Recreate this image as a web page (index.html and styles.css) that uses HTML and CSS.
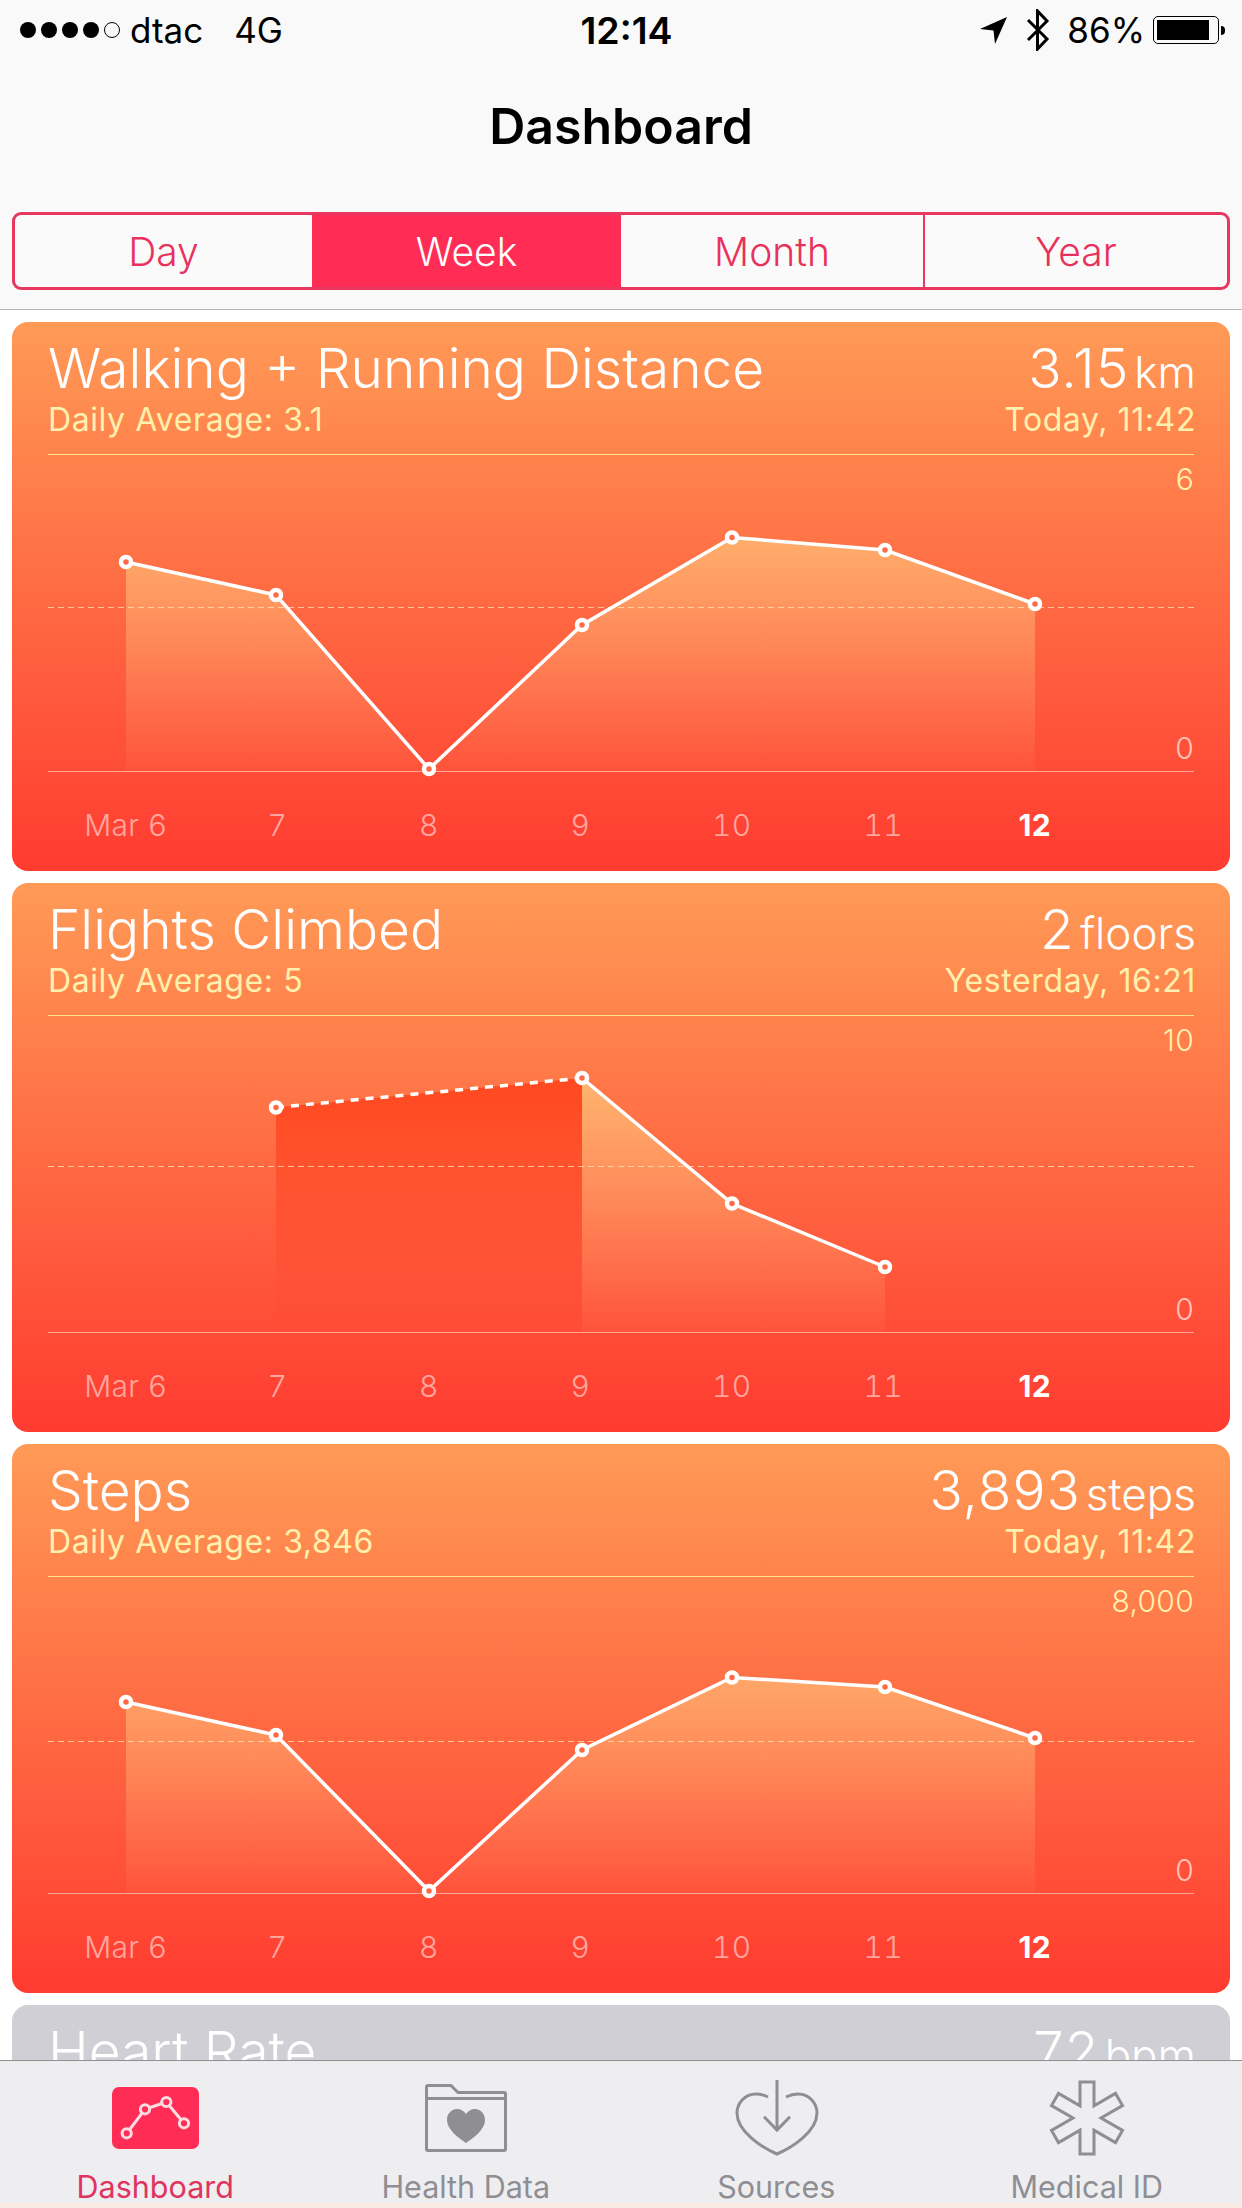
FILE: index.html
```html
<!DOCTYPE html>
<html lang="en">
<head>
  <meta charset="UTF-8">
  <meta name="viewport" content="width=device-width, initial-scale=1.0">
  <title>Dashboard</title>
  <link rel="stylesheet" href="styles.css">
</head>
<body>
<div class="screen">

  <header class="top">
    <div class="statusbar">
      <div class="status-left">
        <span class="dot"></span><span class="dot"></span><span class="dot"></span><span class="dot"></span><span class="dot empty"></span>
        <span class="carrier">dtac</span>
        <span class="network">4G</span>
      </div>
      <div class="clock">12:14</div>
      <div class="status-right">
        <svg class="ic-arrow" width="28" height="27" viewBox="0 0 28 27"><path d="M0 12 L27 0 L15 27 L13.5 13.5 Z" fill="#000"/></svg>
        <svg class="ic-bt" width="24" height="42" viewBox="0 0 24 42"><path d="M2 11 L21 30 L11.5 40 L11.5 2 L21 12 L2 31" fill="none" stroke="#000" stroke-width="3"/></svg>
        <span class="percent">86%</span>
        <div class="battery"><div class="battery-fill"></div></div>
        <div class="battery-nub"></div>
      </div>
    </div>
    <div class="navtitle">Dashboard</div>
    <div class="segments">
      <div class="seg seg-day">Day</div>
      <div class="seg seg-week active">Week</div>
      <div class="seg seg-month">Month</div>
      <div class="seg seg-year">Year</div>
    </div>
  </header>

  <main class="cards">

    <section class="card">
      <div class="card-head">
        <div class="row">
          <span class="title">Walking + Running Distance</span>
          <span class="value">3.15<small>km</small></span>
        </div>
        <div class="row row-sub">
          <span>Daily Average: 3.1</span>
          <span>Today, 11:42</span>
        </div>
      </div>
      <div class="chart">
        <svg class="plot" width="1146" height="330" viewBox="0 0 1146 330">
          <defs>
            <linearGradient id="areaFill" gradientUnits="userSpaceOnUse" x1="0" y1="70" x2="0" y2="316">
              <stop offset="0" stop-color="#ffbc74" stop-opacity="0.85"/>
              <stop offset="1" stop-color="#ffa070" stop-opacity="0.08"/>
            </linearGradient>
            <linearGradient id="gapFill" gradientUnits="userSpaceOnUse" x1="0" y1="80" x2="0" y2="316">
              <stop offset="0" stop-color="#ff4a22" stop-opacity="1"/>
              <stop offset="1" stop-color="#ff4a32" stop-opacity="0.2"/>
            </linearGradient>
          </defs>
          <path d="M78 107 L228 140 L381 314 L534 170 L684 82.5 L837 95 L987 149 L987 316 L78 316 Z" fill="url(#areaFill)"/>
          <line class="mid" x1="0" y1="152.5" x2="1146" y2="152.5"/>
          <line class="base" x1="0" y1="316.5" x2="1146" y2="316.5"/>
          <polyline class="trace" points="78,107 228,140 381,314 534,170 684,82.5 837,95 987,149"/>
          <circle class="pt" cx="78" cy="107" r="5"/>
          <circle class="pt" cx="228" cy="140" r="5"/>
          <circle class="pt" cx="381" cy="314" r="5"/>
          <circle class="pt" cx="534" cy="170" r="5"/>
          <circle class="pt" cx="684" cy="82.5" r="5"/>
          <circle class="pt" cx="837" cy="95" r="5"/>
          <circle class="pt" cx="987" cy="149" r="5"/>
        </svg>
        <span class="y-max">6</span>
        <span class="y-min">0</span>
      </div>
      <div class="days">
        <span>Mar 6</span><span>7</span><span>8</span><span>9</span><span>10</span><span>11</span><span class="today">12</span>
      </div>
    </section>

    <section class="card">
      <div class="card-head">
        <div class="row">
          <span class="title">Flights Climbed</span>
          <span class="value">2<small>floors</small></span>
        </div>
        <div class="row row-sub">
          <span>Daily Average: 5</span>
          <span>Yesterday, 16:21</span>
        </div>
      </div>
      <div class="chart">
        <svg class="plot" width="1146" height="330" viewBox="0 0 1146 330">
          <path d="M228 91.5 L534 62 L534 316 L228 316 Z" fill="url(#gapFill)"/>
          <path d="M534 62 L684 187.5 L837 251 L837 316 L534 316 Z" fill="url(#areaFill)"/>
          <line class="mid" x1="0" y1="150.5" x2="1146" y2="150.5"/>
          <line class="base" x1="0" y1="316.5" x2="1146" y2="316.5"/>
          <line class="trace gap" x1="228" y1="91.5" x2="534" y2="62"/>
          <polyline class="trace" points="534,62 684,187.5 837,251"/>
          <circle class="pt" cx="228" cy="91.5" r="5"/>
          <circle class="pt" cx="534" cy="62" r="5"/>
          <circle class="pt" cx="684" cy="187.5" r="5"/>
          <circle class="pt" cx="837" cy="251" r="5"/>
        </svg>
        <span class="y-max">10</span>
        <span class="y-min">0</span>
      </div>
      <div class="days">
        <span>Mar 6</span><span>7</span><span>8</span><span>9</span><span>10</span><span>11</span><span class="today">12</span>
      </div>
    </section>

    <section class="card">
      <div class="card-head">
        <div class="row">
          <span class="title">Steps</span>
          <span class="value">3,893<small>steps</small></span>
        </div>
        <div class="row row-sub">
          <span>Daily Average: 3,846</span>
          <span>Today, 11:42</span>
        </div>
      </div>
      <div class="chart">
        <svg class="plot" width="1146" height="330" viewBox="0 0 1146 330">
          <path d="M78 125 L228 158 L381 314 L534 173 L684 100.5 L837 110 L987 161 L987 316 L78 316 Z" fill="url(#areaFill)"/>
          <line class="mid" x1="0" y1="164.5" x2="1146" y2="164.5"/>
          <line class="base" x1="0" y1="316.5" x2="1146" y2="316.5"/>
          <polyline class="trace" points="78,125 228,158 381,314 534,173 684,100.5 837,110 987,161"/>
          <circle class="pt" cx="78" cy="125" r="5"/>
          <circle class="pt" cx="228" cy="158" r="5"/>
          <circle class="pt" cx="381" cy="314" r="5"/>
          <circle class="pt" cx="534" cy="173" r="5"/>
          <circle class="pt" cx="684" cy="100.5" r="5"/>
          <circle class="pt" cx="837" cy="110" r="5"/>
          <circle class="pt" cx="987" cy="161" r="5"/>
        </svg>
        <span class="y-max">8,000</span>
        <span class="y-min">0</span>
      </div>
      <div class="days">
        <span>Mar 6</span><span>7</span><span>8</span><span>9</span><span>10</span><span>11</span><span class="today">12</span>
      </div>
    </section>

    <section class="card card-off">
      <div class="card-head">
        <div class="row">
          <span class="title">Heart Rate</span>
          <span class="value">72<small>bpm</small></span>
        </div>
      </div>
    </section>

  </main>

  <nav class="tabbar">
    <div class="tab active">
      <svg width="90" height="76" viewBox="0 0 90 76">
        <rect x="2" y="7" width="87" height="62" rx="7" fill="#ff2d55"/>
        <polyline points="16.7,53.3 35,29.3 56.3,22 74,43.3" fill="none" stroke="#ffdbe2" stroke-width="3"/>
        <circle cx="16.7" cy="53.3" r="4.6" fill="#ff2d55" stroke="#ffdbe2" stroke-width="3"/>
        <circle cx="35" cy="29.3" r="4.6" fill="#ff2d55" stroke="#ffdbe2" stroke-width="3"/>
        <circle cx="56.3" cy="22" r="4.6" fill="#ff2d55" stroke="#ffdbe2" stroke-width="3"/>
        <circle cx="74" cy="43.3" r="4.6" fill="#ff2d55" stroke="#ffdbe2" stroke-width="3"/>
      </svg>
      <span>Dashboard</span>
    </div>
    <div class="tab">
      <svg width="90" height="76" viewBox="0 0 90 76">
        <path d="M5.5 18 L5.5 7 Q5.5 5.5 7 5.5 L30 5.5 L37 12.5 L83 12.5 Q84.5 12.5 84.5 14 L84.5 69 Q84.5 70.5 83 70.5 L7 70.5 Q5.5 70.5 5.5 69 Z M5.5 18.5 L84.5 18.5" fill="none" stroke="#8e8e93" stroke-width="3"/>
        <path d="M45 63 C38 58 26 50 26 40 C26 33 31 29 36 29 C40 29 43 31 45 34 C47 31 50 29 54 29 C59 29 64 33 64 40 C64 50 52 58 45 63 Z" fill="#8e8e93"/>
      </svg>
      <span>Health Data</span>
    </div>
    <div class="tab">
      <svg width="90" height="76" viewBox="0 0 90 76">
        <path d="M37 17 C33 15 29 14 25 14 C14 14 6 23 6 33 C6 52 32 68 46 74 C60 68 86 52 86 33 C86 23 78 14 67 14 C63 14 59 15 55 17" fill="none" stroke="#8e8e93" stroke-width="3"/>
        <path d="M46 0 L46 50 M33 36.7 L46 50 L59 36.7" fill="none" stroke="#8e8e93" stroke-width="3"/>
      </svg>
      <span>Sources</span>
    </div>
    <div class="tab">
      <svg width="90" height="76" viewBox="0 0 90 76">
        <polygon points="38,2 52,2 52,25.9 73.5,13.4 80.5,25.6 59,38 80.5,50.4 73.5,62.6 52,50.1 52,74 38,74 38,50.1 16.5,62.6 9.5,50.4 31,38 9.5,25.6 16.5,13.4 38,25.9" fill="none" stroke="#8e8e93" stroke-width="3"/>
      </svg>
      <span>Medical ID</span>
    </div>
  </nav>

</div>
</body>
</html>
```

FILE: styles.css
```css
* {
  box-sizing: border-box;
}

body {
  margin: 0;
  background-color: #fff;
  font-family: Inter, "Liberation Sans", sans-serif;
}

.screen {
  position: relative;
  width: 1242px;
  height: 2208px;
  overflow: hidden;
  background-color: #fff;
}

/* top bar */
.top {
  height: 310px;
  background-color: #f9f9f9;
  border-bottom: 1px solid #b4b4b4;
}

.statusbar {
  display: flex;
  justify-content: space-between;
  align-items: center;
  height: 60px;
  padding: 0 17px 0 20px;
  font-size: 35px;
  color: #000;
}

.status-left {
  display: flex;
  align-items: center;
  flex: 1;
}

.dot {
  width: 16px;
  height: 16px;
  margin-right: 5px;
  border-radius: 50%;
  background-color: #000;
}

.dot.empty {
  background-color: transparent;
  border: 1.5px solid #000;
}

.carrier {
  margin-left: 5px;
}

.network {
  margin-left: 31px;
}

.clock {
  font-size: 37.5px;
  font-weight: 600;
  margin-left: 8px;
}

.status-right {
  display: flex;
  align-items: center;
  justify-content: flex-end;
  flex: 1;
}

.ic-arrow {
  margin-right: 18px;
}

.ic-bt {
  margin-right: 17px;
}

.percent {
  margin-right: 8px;
}

.battery {
  width: 66px;
  height: 28px;
  padding: 3px;
  border: 1.5px solid #000;
  border-radius: 5px;
}

.battery-fill {
  width: 52px;
  height: 100%;
  background-color: #000;
}

.battery-nub {
  width: 4px;
  height: 9px;
  margin-left: 2px;
  border-radius: 0 4px 4px 0;
  background-color: #000;
}

.navtitle {
  height: 132px;
  line-height: 132px;
  text-align: center;
  font-size: 50px;
  font-weight: 600;
  color: #000;
}

.segments {
  display: grid;
  grid-template-columns: 297px 309px 302px 304px;
  height: 78px;
  margin: 20px 12px 0;
  border: 3px solid #e8385f;
  border-radius: 9px;
  overflow: hidden;
  background-color: #fafafa;
}

.seg {
  line-height: 74px;
  text-align: center;
  font-size: 39px;
  font-weight: 300;
  color: #e8315c;
}

.seg.active {
  background-color: #ff2d55;
  color: #fff;
}

.seg-year {
  border-left: 2px solid #e8385f;
}

/* cards */
.cards {
  display: flex;
  flex-direction: column;
  gap: 12px;
  padding: 12px 12px 0;
}

.card {
  flex: none;
  height: 549px;
  padding: 0 36px;
  border-radius: 16px;
  background-image: linear-gradient(#ff9a56, #ff3b30);
  color: #fff;
}

.card-off {
  background-image: none;
  background-color: #cfcfd5;
}

.card-head {
  height: 133px;
  padding-top: 14px;
  border-bottom: 1px solid #ffe38c;
}

.card-off .card-head {
  border-bottom: none;
}

.row {
  display: flex;
  justify-content: space-between;
  align-items: baseline;
  height: 64px;
  margin-right: -2px;
  line-height: 64px;
}

.title,
.value {
  font-size: 55px;
  font-weight: 300;
}

.value {
  letter-spacing: 1px;
}

.value small {
  margin-left: 5px;
  font-size: 44px;
  letter-spacing: 0;
}

.row-sub {
  height: 40px;
  line-height: 40px;
  font-size: 32px;
  font-weight: 400;
  letter-spacing: 0.6px;
  color: #fff0ae;
}

.chart {
  position: relative;
  height: 317px;
}

.plot {
  display: block;
}

.mid {
  stroke: #ffe6b0;
  stroke-opacity: 0.75;
  stroke-dasharray: 6 4;
}

.base {
  stroke: #fff;
  stroke-opacity: 0.5;
}

.trace {
  fill: none;
  stroke: #fff;
  stroke-width: 3.5;
}

.trace.gap {
  stroke-dasharray: 8 7;
}

.pt {
  fill: #ff6a45;
  stroke: #fff;
  stroke-width: 4.5;
}

.y-max,
.y-min {
  position: absolute;
  right: 0;
  font-size: 30px;
  font-weight: 300;
  letter-spacing: 0.3px;
  line-height: 34px;
}

.y-max {
  top: 7px;
  color: #fff0ae;
}

.y-min {
  top: 276px;
  color: #fff;
  opacity: 0.65;
}

.days {
  display: grid;
  grid-template-columns: repeat(7, 151.5px);
  padding: 36px 0 0 2px;
  line-height: 34px;
  text-align: center;
  font-size: 30px;
  font-weight: 300;
  font-variant-numeric: tabular-nums;
  letter-spacing: 0.3px;
  color: rgba(255, 255, 255, 0.55);
}

.days .today {
  font-weight: 700;
  font-variant-numeric: normal;
  color: #fff;
}

/* tab bar lies over the scrolled cards */
.tabbar {
  position: absolute;
  left: 0;
  right: 0;
  bottom: 0;
  display: grid;
  grid-template-columns: repeat(4, 1fr);
  height: 148px;
  padding-top: 19px;
  border-top: 1px solid #8f8f8f;
  border-bottom: 5px solid #fbe9e4;
  background-color: #eeeef1;
}

.tab {
  display: flex;
  flex-direction: column;
  align-items: center;
  font-size: 30.5px;
  line-height: 36px;
  color: #8e8e93;
}

.tab svg {
  display: block;
  margin-bottom: 13px;
}

.tab.active {
  color: #e0335f;
}
```
